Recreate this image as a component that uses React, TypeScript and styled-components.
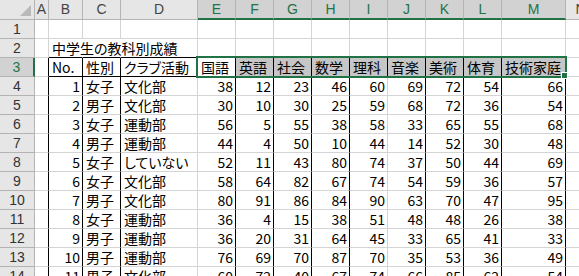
import { Fragment } from "react";
import styled, { createGlobalStyle } from "styled-components";

const GREEN = "#217346";
const GRID = "#d4d4d4";
const HEAD_LINE = "#b4b4b4";

const GlobalStyle = createGlobalStyle`
  html, body {
    margin: 0;
    padding: 0;
    background: #ffffff;
    overflow: hidden;
  }
`;

const Wrapper = styled.div`
  position: relative;
  width: 579px;
  height: 276px;
  overflow: hidden;
`;

const Sheet = styled.div`
  display: grid;
  grid-template-columns: 35px 14px 34px 38px 77px repeat(8, 38px) 64px 30px;
  grid-template-rows: 20px;
  grid-auto-rows: 19px;
  font-family: "Noto Sans CJK JP", "Liberation Sans", sans-serif;
  color: #000;
`;

const Corner = styled.div`
  position: relative;
  box-sizing: border-box;
  background: #e6e6e6;
  border-right: 1px solid ${HEAD_LINE};
  border-bottom: 1px solid ${HEAD_LINE};

  &::after {
    content: "";
    position: absolute;
    right: 3px;
    bottom: 3px;
    width: 0;
    height: 0;
    border-left: 11px solid transparent;
    border-bottom: 11px solid #b9b9b9;
  }
`;

const ColHead = styled.div<{ $active?: boolean }>`
  box-sizing: border-box;
  background: ${(p) => (p.$active ? "#d2d2d2" : "#e6e6e6")};
  border-right: 1px solid ${HEAD_LINE};
  border-bottom: ${(p) => (p.$active ? `2px solid ${GREEN}` : `1px solid ${HEAD_LINE}`)};
  color: ${(p) => (p.$active ? GREEN : "#444")};
  font-family: "Liberation Sans", "DejaVu Sans", sans-serif;
  font-size: 14px;
  line-height: 19px;
  text-align: center;
  overflow: hidden;
`;

const RowHead = styled.div<{ $active?: boolean }>`
  box-sizing: border-box;
  background: ${(p) => (p.$active ? "#d2d2d2" : "#e6e6e6")};
  border-right: ${(p) => (p.$active ? `2px solid ${GREEN}` : `1px solid ${HEAD_LINE}`)};
  border-bottom: 1px solid ${HEAD_LINE};
  color: ${(p) => (p.$active ? GREEN : "#333")};
  font-family: "Liberation Sans", "DejaVu Sans", sans-serif;
  font-size: 14px;
  line-height: 18px;
  text-align: center;
`;

const Cell = styled.div<{ $align?: "left" | "right"; $r?: string; $b?: string; $fill?: string }>`
  box-sizing: border-box;
  border-right: 1px solid ${(p) => p.$r ?? GRID};
  border-bottom: 1px solid ${(p) => p.$b ?? GRID};
  background: ${(p) => p.$fill ?? "transparent"};
  font-size: 14px;
  line-height: 18px;
  font-feature-settings: "palt";
  padding: 0 2px 0 3px;
  text-align: ${(p) => p.$align ?? "left"};
  white-space: nowrap;
  overflow: visible;
`;

const Selection = styled.div`
  position: absolute;
  left: 196px;
  top: 56px;
  width: 371px;
  height: 22px;
  box-sizing: border-box;
  border: 2px solid ${GREEN};
  pointer-events: none;
`;

const FillHandle = styled.div`
  position: absolute;
  left: 561px;
  top: 72px;
  width: 5px;
  height: 5px;
  background: ${GREEN};
  border: 1px solid #fff;
`;

const letters = ["A", "B", "C", "D", "E", "F", "G", "H", "I", "J", "K", "L", "M", "N"];
const subjects = ["国語", "英語", "社会", "数学", "理科", "音楽", "美術", "体育", "技術家庭"];

type Student = [number, string, string, number[]];

const students: Student[] = [
  [1, "女子", "文化部", [38, 12, 23, 46, 60, 69, 72, 54, 66]],
  [2, "男子", "文化部", [30, 10, 30, 25, 59, 68, 72, 36, 54]],
  [3, "女子", "運動部", [56, 5, 55, 38, 58, 33, 65, 55, 68]],
  [4, "男子", "運動部", [44, 4, 50, 10, 44, 14, 52, 30, 48]],
  [5, "女子", "していない", [52, 11, 43, 80, 74, 37, 50, 44, 69]],
  [6, "女子", "文化部", [58, 64, 82, 67, 74, 54, 59, 36, 57]],
  [7, "男子", "文化部", [80, 91, 86, 84, 90, 63, 70, 47, 95]],
  [8, "女子", "運動部", [36, 4, 15, 38, 51, 48, 48, 26, 38]],
  [9, "男子", "運動部", [36, 20, 31, 64, 45, 33, 65, 41, 33]],
  [10, "男子", "運動部", [76, 69, 70, 87, 70, 35, 53, 36, 49]],
  [11, "男子", "文化部", [60, 72, 40, 67, 74, 66, 85, 62, 54]],
];

// right border colour of the score columns E..M in the data rows
const scoreEdge = (i: number) => (i === 4 ? GRID : "#000");

export default function App() {
  return (
    <Wrapper>
      <GlobalStyle />
      <Sheet>
        <Corner />
        {letters.map((l, i) => (
          <ColHead key={l} $active={i >= 4 && i <= 12}>
            {l}
          </ColHead>
        ))}

        {/* row 1 */}
        <RowHead>1</RowHead>
        {letters.map((l) => (
          <Cell key={l} />
        ))}

        {/* row 2 - title */}
        <RowHead>2</RowHead>
        <Cell />
        <Cell $r="transparent" $b="#000">中学生の教科別成績</Cell>
        <Cell $r="transparent" $b="#000" />
        <Cell $b="#000" />
        {subjects.map((s) => (
          <Cell key={s} $b="#000" />
        ))}
        <Cell />

        {/* row 3 - table header */}
        <RowHead $active>3</RowHead>
        <Cell $r="#000" />
        <Cell $r="#000" $b="#000">No.</Cell>
        <Cell $r="#000" $b="#000">性別</Cell>
        <Cell $r="#000" $b="#000">クラブ活動</Cell>
        {subjects.map((s, i) => (
          <Cell key={s} $r="#000" $b="#000" $fill={i === 0 ? "#fff" : "#c6c6c6"}>
            {s}
          </Cell>
        ))}
        <Cell />

        {students.map(([no, sex, club, scores], r) => (
          <Fragment key={no}>
            <RowHead>{r + 4}</RowHead>
            <Cell $r="#000" />
            <Cell $r="#000" $align="right">{no}</Cell>
            <Cell $r="#000">{sex}</Cell>
            <Cell $r={GRID}>{club}</Cell>
            {scores.map((v, i) => (
              <Cell key={i} $r={scoreEdge(i)} $align="right">
                {v}
              </Cell>
            ))}
            <Cell />
          </Fragment>
        ))}
      </Sheet>
      <Selection />
      <FillHandle />
    </Wrapper>
  );
}
